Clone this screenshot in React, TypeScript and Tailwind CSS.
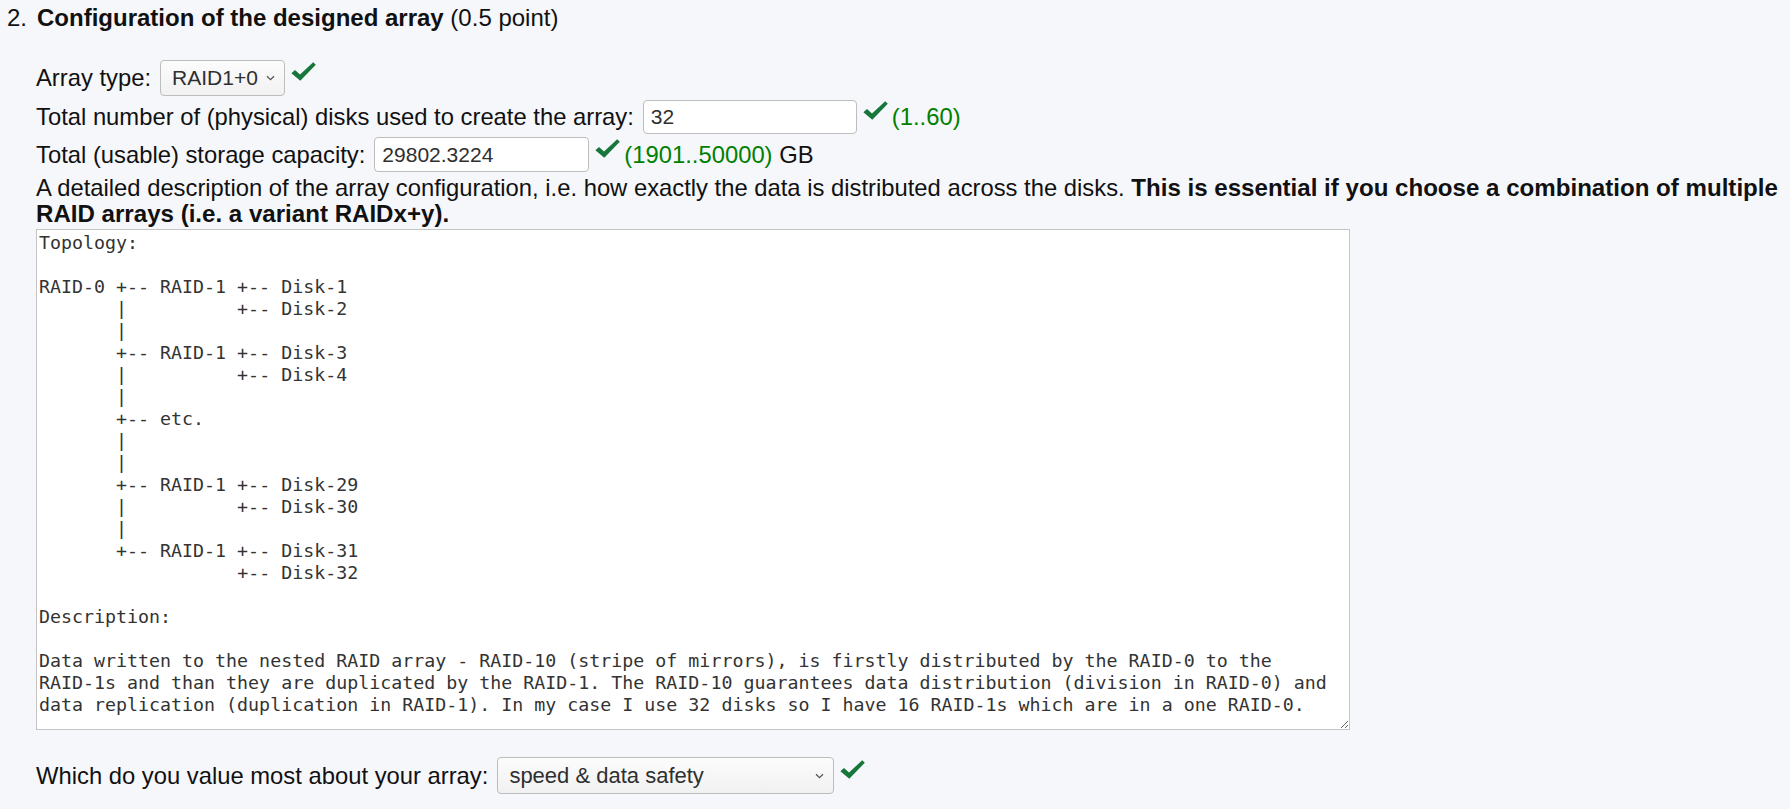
import React from "react";

const topology = `Topology:

RAID-0 +-- RAID-1 +-- Disk-1
       |          +-- Disk-2
       |
       +-- RAID-1 +-- Disk-3
       |          +-- Disk-4
       |
       +-- etc.
       |
       |
       +-- RAID-1 +-- Disk-29
       |          +-- Disk-30
       |
       +-- RAID-1 +-- Disk-31
                  +-- Disk-32

Description:

Data written to the nested RAID array - RAID-10 (stripe of mirrors), is firstly distributed by the RAID-0 to the
RAID-1s and than they are duplicated by the RAID-1. The RAID-10 guarantees data distribution (division in RAID-0) and
data replication (duplication in RAID-1). In my case I use 32 disks so I have 16 RAID-1s which are in a one RAID-0.`;

const Check = () => (
  <svg width="25" height="19" viewBox="0 0 25 19" className="ml-[6px] mb-[13px] shrink-0">
    <path d="M0.4 11.2 L4 8 L9 12.4 L22.2 0.3 L24.8 2.7 L9.3 18.8 Z" fill="#17763a" />
  </svg>
);

const Chevron = () => (
  <svg
    width="9"
    height="6"
    viewBox="0 0 9 6"
    className="pointer-events-none absolute right-[10px] top-1/2 -translate-y-1/2"
  >
    <path d="M1 1.2 L4.5 4.6 L8 1.2" fill="none" stroke="#555" strokeWidth="1.3" />
  </svg>
);

const Select = ({
  width,
  height,
  size,
  value,
  options,
}: {
  width: string;
  height: string;
  size: string;
  value: string;
  options: string[];
}) => (
  <div className={`relative ${width} ${height}`}>
    <select
      defaultValue={value}
      className={`h-full w-full appearance-none rounded-[4px] border border-[#bdbdbd] bg-gradient-to-b from-[#fcfcfc] to-[#f1f1f1] pl-[11px] ${size} text-[#2f2f2f] outline-none`}
    >
      {options.map((o) => (
        <option key={o}>{o}</option>
      ))}
    </select>
    <Chevron />
  </div>
);

export default function App() {
  return (
    <div className="min-h-screen w-full overflow-hidden bg-[#f6f7fb] text-[#111] font-['Liberation_Sans',Arial,sans-serif]">
      <div className="flex pt-[4px] text-[24px] leading-[28px]">
        <span className="w-[37px] pl-[7px]">2.</span>
        <h2>
          <span className="font-bold">Configuration of the designed array</span> (0.5 point)
        </h2>
      </div>

      <div className="mt-[26px] pl-[36px] text-[23.8px] leading-[28px]">
        <div className="flex h-[40px] items-center">
          <span>Array type:</span>
          <div className="ml-[9px]">
            <Select
              width="w-[125px]"
              height="h-[36px]"
              size="text-[21px]"
              value="RAID1+0"
              options={["RAID0", "RAID1", "RAID5", "RAID6", "RAID1+0"]}
            />
          </div>
          <Check />
        </div>

        <div className="flex h-[38px] items-center">
          <span>Total number of (physical) disks used to create the array:</span>
          <input
            defaultValue="32"
            className="ml-[9px] h-[34px] w-[214px] rounded-[4px] border border-[#bdbdbd] bg-white pl-[7px] text-[21px] text-[#2f2f2f] outline-none"
          />
          <Check />
          <span className="ml-[4px] text-[#008000]">(1..60)</span>
        </div>

        <div className="flex h-[37px] items-center">
          <span>Total (usable) storage capacity:</span>
          <input
            defaultValue="29802.3224"
            className="ml-[9px] h-[35px] w-[215px] rounded-[4px] border border-[#bdbdbd] bg-white pl-[7px] text-[21px] text-[#2f2f2f] outline-none"
          />
          <Check />
          <span className="ml-[4px] whitespace-pre">
            <span className="text-[#008000]">(1901..50000)</span> GB
          </span>
        </div>

        <p className="mt-[2px] whitespace-nowrap leading-[26px]">
          A detailed description of the array configuration, i.e. how exactly the data is distributed across the disks.{" "}
          <b className="text-[24.1px]">
            This is essential if you choose a combination of multiple
            <br />
            RAID arrays (i.e. a variant RAIDx+y).
          </b>
        </p>

        <textarea
          defaultValue={topology}
          className="mt-[2px] block h-[501px] w-[1314px] border border-[#c4c4c4] bg-white p-[2px] font-['DejaVu_Sans_Mono',monospace] text-[18.3px] leading-[22px] text-[#333] outline-none"
        />

        <div className="mt-[25px] flex h-[41px] items-center">
          <span>Which do you value most about your array:</span>
          <div className="ml-[9px]">
            <Select
              width="w-[337px]"
              height="h-[37px]"
              size="text-[22px]"
              value="speed & data safety"
              options={["speed", "data safety", "capacity", "speed & data safety", "speed & capacity"]}
            />
          </div>
          <Check />
        </div>
      </div>
    </div>
  );
}
